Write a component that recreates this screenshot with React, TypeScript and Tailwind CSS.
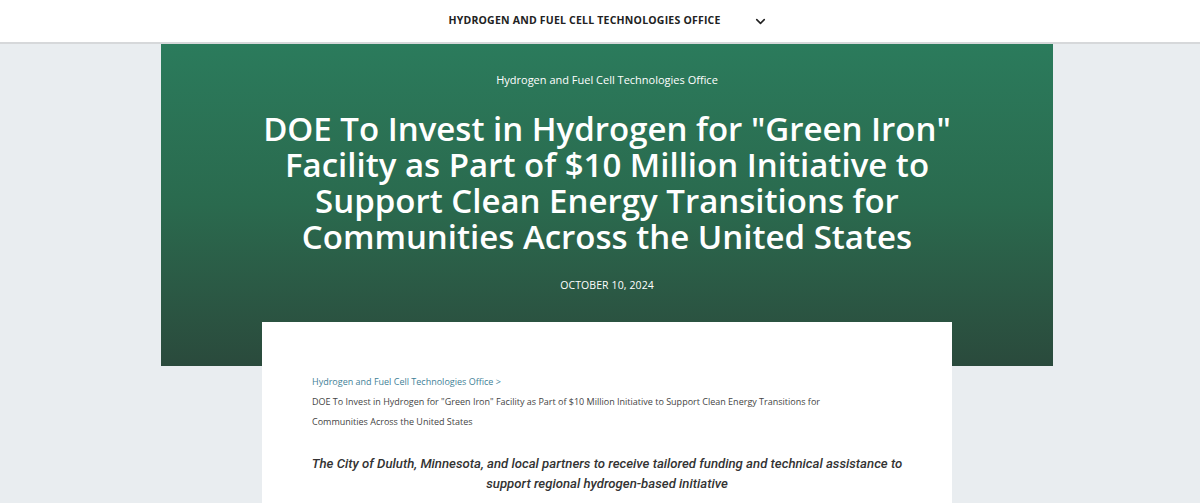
import { ChevronDown } from 'lucide-react';

export default function App() {
  return (
    <div className="min-h-[503px] bg-[#e9edf0] font-['Open_Sans',sans-serif] overflow-hidden">
      <header className="h-[44px] bg-white border-b-2 border-[#d6d8da] flex items-center justify-center">
        <div className="flex items-center ml-[16px]">
          <span className="text-[10.5px] font-bold tracking-[0.02em] text-[#222]">
            HYDROGEN AND FUEL CELL TECHNOLOGIES OFFICE
          </span>
          <ChevronDown className="ml-[32px] h-[15px] w-[15px] text-[#222]" strokeWidth={2.5} />
        </div>
      </header>

      <section className="ml-[161px] w-[892px] h-[322px] bg-gradient-to-b from-[#2b7b5c] via-[#2a6a4e] to-[#2a4a3c] flex flex-col items-center text-white">
        <p className="mt-[27px] text-[11px] leading-[18px]">Hydrogen and Fuel Cell Technologies Office</p>
        <h1 className="mt-[22px] max-w-[720px] text-center text-[33px] leading-[36px] font-semibold">
          DOE To Invest in Hydrogen for "Green Iron" Facility as Part of $10 Million Initiative to Support Clean Energy
          Transitions for Communities Across the United States
        </h1>
        <p className="mt-[22px] text-[10.5px] leading-[16px] font-medium tracking-[0.01em]">OCTOBER 10, 2024</p>
      </section>

      <main className="relative -mt-[44px] ml-[262px] w-[690px] bg-white px-[50px] pt-[50px] pb-[40px]">
        <nav className="text-[9px] leading-[20px] text-[#444] max-w-[530px]">
          <a className="text-[#3f7f97]">Hydrogen and Fuel Cell Technologies Office</a>
          <span className="text-[#3f7f97]"> &gt;</span>
          <p>
            DOE To Invest in Hydrogen for "Green Iron" Facility as Part of $10 Million Initiative to Support Clean Energy
            Transitions for Communities Across the United States
          </p>
        </nav>
        <p className="mt-[22px] -mx-[10px] text-center font-['Roboto',sans-serif] text-[13.2px] leading-[20px] italic font-medium text-[#333]">
          The City of Duluth, Minnesota, and local partners to receive tailored funding and technical assistance to
          support regional hydrogen-based initiative
        </p>
      </main>
    </div>
  );
}
